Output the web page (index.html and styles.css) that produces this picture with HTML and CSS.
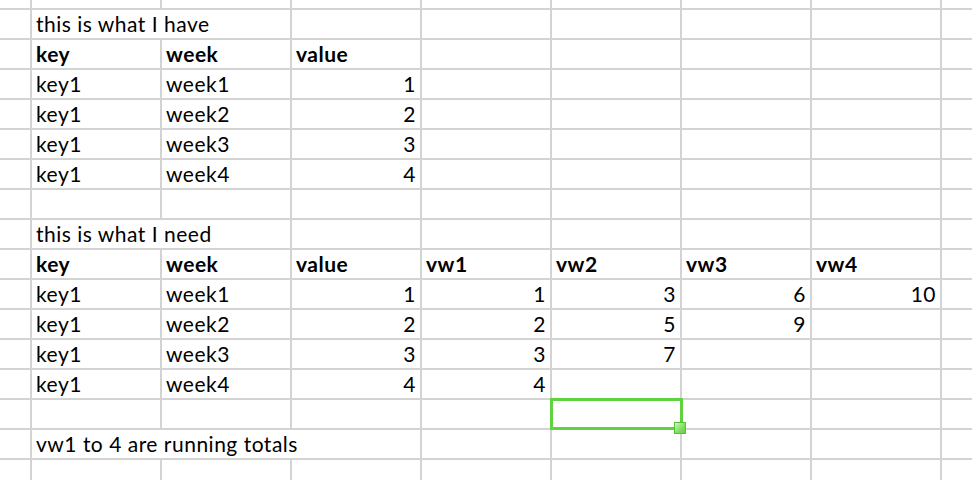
FILE: index.html
```html
<!DOCTYPE html>
<html>
<head>
<meta charset="utf-8">
<title>Sheet</title>
<link rel="stylesheet" href="styles.css">
</head>
<body>
<div class="sheet">
  <div></div><div></div><div></div><div></div><div></div><div></div><div></div><div></div><div></div>

  <div></div><div class="s2">this is what I have</div><div></div><div></div><div></div><div></div><div></div><div></div>

  <div></div><div class="b">key</div><div class="b">week</div><div class="b">value</div><div></div><div></div><div></div><div></div><div></div>

  <div></div><div>key1</div><div>week1</div><div class="n">1</div><div></div><div></div><div></div><div></div><div></div>
  <div></div><div>key1</div><div>week2</div><div class="n">2</div><div></div><div></div><div></div><div></div><div></div>
  <div></div><div>key1</div><div>week3</div><div class="n">3</div><div></div><div></div><div></div><div></div><div></div>
  <div></div><div>key1</div><div>week4</div><div class="n">4</div><div></div><div></div><div></div><div></div><div></div>

  <div></div><div></div><div></div><div></div><div></div><div></div><div></div><div></div><div></div>

  <div></div><div class="s2">this is what I need</div><div></div><div></div><div></div><div></div><div></div><div></div>

  <div></div><div class="b">key</div><div class="b">week</div><div class="b">value</div><div class="b">vw1</div><div class="b">vw2</div><div class="b">vw3</div><div class="b">vw4</div><div></div>

  <div></div><div>key1</div><div>week1</div><div class="n">1</div><div class="n">1</div><div class="n">3</div><div class="n">6</div><div class="n">10</div><div></div>
  <div></div><div>key1</div><div>week2</div><div class="n">2</div><div class="n">2</div><div class="n">5</div><div class="n">9</div><div></div><div></div>
  <div></div><div>key1</div><div>week3</div><div class="n">3</div><div class="n">3</div><div class="n">7</div><div></div><div></div><div></div>
  <div></div><div>key1</div><div>week4</div><div class="n">4</div><div class="n">4</div><div></div><div></div><div></div><div></div>

  <div></div><div></div><div></div><div></div><div></div><div class="sel"><span class="sel-box"></span><span class="sel-handle"></span></div><div></div><div></div><div></div>

  <div></div><div class="s3">vw1 to 4 are running totals</div><div></div><div></div><div></div><div></div><div></div>

  <div></div><div></div><div></div><div></div><div></div><div></div><div></div><div></div><div></div>
</div>
</body>
</html>
```
FILE: styles.css
```css
html, body {
  margin: 0;
  padding: 0;
  background: #fff;
}

.sheet {
  display: grid;
  grid-template-columns: 30px repeat(7, 128px) 30px;
  grid-template-rows: 8px repeat(15, 28px) 20px;
  gap: 2px;
  width: 972px;
  height: 480px;
  background: #d3d3d3;
  font-family: Lato, "Open Sans", sans-serif;
  font-size: 21px;
  letter-spacing: 0.5px;
  color: #000;
  overflow: hidden;
}

.sheet > div {
  background: #fff;
  padding: 0 4px;
  line-height: 27px;
  white-space: nowrap;
  overflow: hidden;
}

.sheet > .b {
  font-weight: bold;
}

.sheet > .n {
  text-align: right;
  padding-right: 4px;
}

.s2 {
  grid-column: span 2;
}

.s3 {
  grid-column: span 3;
}

.sheet > .sel {
  position: relative;
  overflow: visible;
}

.sel-box {
  position: absolute;
  left: -2px;
  top: -2px;
  width: 133px;
  height: 32px;
  box-sizing: border-box;
  border: 3px solid #5fd23f;
}

.sel-handle {
  position: absolute;
  left: 122px;
  top: 22px;
  width: 12px;
  height: 12px;
  box-sizing: border-box;
  border: 1px solid #4fc431;
  background: linear-gradient(135deg, #d4f3c8 0%, #7fdc62 60%, #5fd23f 100%);
}
```
